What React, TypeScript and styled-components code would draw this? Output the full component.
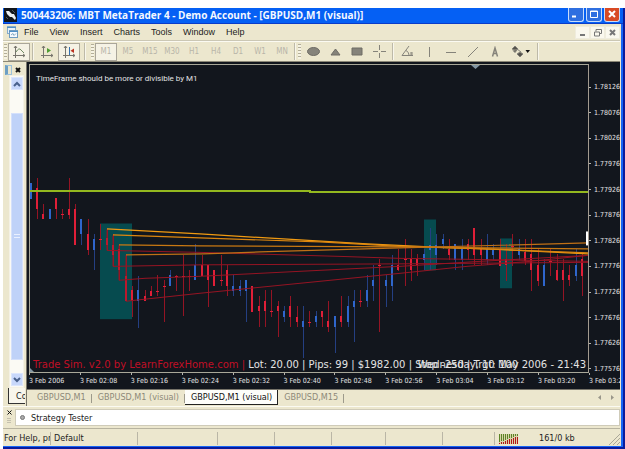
import React from "react";
import styled, { createGlobalStyle } from "styled-components";

const FACE = "#ece7ce";
const DARK = "#12161d";
const UI = '"DejaVu Sans Condensed", "DejaVu Sans", sans-serif';
const MENU = '"Liberation Sans", Arial, sans-serif';

const GlobalStyle = createGlobalStyle`
  *, *::before, *::after { box-sizing: border-box; }
  body { margin: 0; background: #fff; font-family: ${UI}; font-size: 9px; color: #222; }
  button { font: inherit; color: inherit; padding: 0; margin: 0; border: 0; background: none; }
  svg { display: block; }
`;

const Page = styled.div`
  min-height: 100vh;
  padding: 8px 0 0 3px;
  display: flex;
  flex-direction: column;
`;
const AppWindow = styled.main`
  flex: 1;
  display: flex;
  flex-direction: column;
  background: ${FACE};
  border-right: 2px solid #0a1c9c;
  border-bottom: 2px solid #0a1c9c;
  box-shadow: inset -2px -1px 0 #1766f5;
  padding: 0 3px 1px 0;
  overflow: hidden;
`;
const TitleBar = styled.header`
  height: 16px;
  flex: none;
  margin-right: -3px;
  padding: 0 3px 2px 1px;
  display: flex;
  align-items: center;
  gap: 4px;
  background: #0560f4;
  border-bottom: 1px solid #0a3cc8;
`;
const Title = styled.h1`
  flex: 1;
  margin: 0;
  font: bold 10px/14px "Open Sans", sans-serif;
  color: #f4f8ff;
  white-space: nowrap;
`;
const Captions = styled.div`
  display: flex;
  gap: 2px;
`;
const CaptionButton = styled.button<{ $close?: boolean }>`
  width: 16px;
  height: 14px;
  border: 1px solid #c8dcfa;
  border-top: 0;
  border-radius: 0 0 3px 3px;
  background: ${(p) => (p.$close ? "#d84a24" : "#2f6fe0")};
  display: grid;
  place-items: center;
`;
const MenuBar = styled.nav`
  height: 17px;
  flex: none;
  display: flex;
  align-items: center;
  gap: 6px;
  padding-left: 4px;
  font: 9px/12px ${MENU};
  border-bottom: 1px solid #cbc7b4;
`;
const MenuItems = styled.div`
  display: flex;
  gap: 11px;
`;
const MenuItem = styled.button`
  height: 14px;
`;
const MdiButtons = styled.div`
  margin-left: auto;
  display: flex;
`;
const MdiButton = styled.button`
  width: 15px;
  height: 13px;
  background: #faf8ee;
  border: 1px solid #efecdd;
  display: grid;
  place-items: center;
`;
const ToolBar = styled.div`
  height: 21px;
  flex: none;
  display: flex;
  align-items: center;
  border-top: 1px solid #fbfaf2;
  border-bottom: 1px solid #8b8776;
`;
const Grip = styled.span`
  width: 3px;
  height: 15px;
  margin: 0 1px;
  background: repeating-linear-gradient(#b3ae98 0 1px, #f6f3e4 1px 3px);
`;
const Rule = styled.span<{ $gap?: number }>`
  width: 2px;
  height: 17px;
  margin: 0 ${(p) => p.$gap ?? 2}px;
  border-left: 1px solid #bdb9a8;
  border-right: 1px solid #f8f6ec;
`;
const Tool = styled.button<{ $pressed?: boolean; $wide?: boolean }>`
  width: ${(p) => (p.$wide ? 29 : 22)}px;
  height: 18px;
  display: grid;
  place-items: center;
  border: 1px solid ${(p) => (p.$pressed ? "#aaa69a" : "transparent")};
  background: ${(p) => (p.$pressed ? "#f5f2e5" : "transparent")};
`;
const Frame = styled(Tool)`
  color: #b8b5a9;
  font-size: 8px;
`;
const Workspace = styled.div`
  flex: 1;
  display: flex;
  min-height: 0;
`;
const SidePanel = styled.aside`
  width: 24px;
  flex: none;
  display: flex;
  flex-direction: column;
  padding-top: 2px;
  border-right: 1px solid #77746a;
`;
const SideHead = styled.div`
  height: 11px;
  flex: none;
  display: flex;
  align-items: center;
  justify-content: space-between;
  padding: 0 5px 0 2px;
`;
const Swatch = styled.span`
  width: 7px;
  height: 10px;
  border: 1px solid #9cc2da;
  border-left: 3px solid #6d9fc4;
`;
const ScrollTrack = styled.div`
  flex: 1;
  width: 15px;
  margin-left: 6px;
  display: flex;
  flex-direction: column;
  align-items: center;
  background: #fbfaf4;
  border: 1px solid #f4f1e4;
`;
const ScrollButton = styled.button`
  width: 12px;
  height: 13px;
  margin: 1px 0;
  background: #c8d8fb;
  border: 1px solid #dce6fc;
  display: grid;
  place-items: center;
`;
const ScrollThumb = styled.div`
  flex: 1;
  width: 12px;
  margin: 22px 0 12px;
  background: #bfd2f8;
  border: 1px solid #d4e0fb;
  display: grid;
  place-items: center;
`;
const SideTab = styled.button`
  width: 17px;
  height: 16px;
  margin: 0 0 2px 5px;
  padding-left: 7px;
  overflow: hidden;
  text-align: left;
  background: #f8f6ec;
  border: 1px solid #333;
  border-top: 0;
  border-right: 0;
`;
const ChartColumn = styled.section`
  flex: 1;
  min-width: 0;
  display: flex;
  flex-direction: column;
`;
const ChartFrame = styled.div`
  flex: 1;
  min-height: 0;
  padding: 2px 0 0 2px;
  background: ${DARK};
  color: #e4e4e4;
  font-size: 7px;
  display: grid;
  grid-template-columns: minmax(0, 1fr) 31px;
  grid-template-rows: minmax(0, 1fr) 16px;
`;
const Plot = styled.div`
  position: relative;
  min-height: 0;
  border: 1px solid #a9a899;
  border-right-color: #a39b90;
`;
const Drawing = styled.svg`
  position: absolute;
  inset: 0;
  width: 100%;
  height: 100%;
`;
const Comment = styled.p`
  position: absolute;
  top: 9px;
  left: 6px;
  margin: 0;
  font: 8px/10px Roboto, sans-serif;
`;
const Overlay = styled.p<{ $end?: boolean }>`
  position: absolute;
  bottom: 1px;
  ${(p) => (p.$end ? "right: 2px;" : "left: 3px;")}
  margin: 0;
  white-space: nowrap;
  font: 10px/13px "DejaVu Sans", sans-serif;
`;
const Red = styled.span`
  color: #c00f26;
`;
const PriceAxis = styled.div`
  display: flex;
  flex-direction: column;
  justify-content: space-between;
  padding-top: 19px;
  overflow: hidden;
`;
const Price = styled.span`
  height: 8px;
  line-height: 8px;
  display: flex;
  align-items: center;
  gap: 3px;
  &::before { content: ""; width: 2px; height: 1px; background: #b5b5ae; }
`;
const TimeAxis = styled.div`
  grid-column: 1 / -1;
  display: grid;
  grid-template-columns: repeat(11, minmax(0, 1fr)) 31px;
  overflow: hidden;
`;
const Time = styled.span`
  white-space: nowrap;
  line-height: 13px;
  &::before { content: ""; display: block; width: 1px; height: 2px; background: #b5b5ae; }
`;
const TabBar = styled.div`
  height: 17px;
  flex: none;
  display: flex;
  align-items: flex-start;
  padding-left: 4px;
  border-top: 1px solid #77746a;
`;
const Tab = styled.button<{ $active?: boolean }>`
  height: 15px;
  padding: 0 6px;
  color: ${(p) => (p.$active ? "#111" : "#8c8979")};
  background: ${(p) => (p.$active ? "#fdfdfa" : "transparent")};
  border-bottom: ${(p) => (p.$active ? "1px solid #222" : "1px solid transparent")};
  position: relative;
  &::after {
    content: "";
    position: absolute;
    right: 0;
    top: ${(p) => (p.$active ? 0 : 4)}px;
    width: 1px;
    height: ${(p) => (p.$active ? 14 : 9)}px;
    background: ${(p) => (p.$active ? "#222" : "#9d9a8b")};
  }
`;
const TabArrows = styled.div`
  margin: 4px 5px 0 auto;
  display: flex;
  gap: 8px;
`;
const Tester = styled.div`
  flex: none;
  height: 23px;
  display: flex;
  border-top: 1px solid #fbfaf2;
  border-bottom: 1px solid #b7b3a0;
  padding: 2px 0;
`;
const TesterHandle = styled.div`
  width: 12px;
  display: flex;
  flex-direction: column;
  align-items: center;
  gap: 3px;
  padding: 1px 0;
`;
const TesterTitle = styled.div`
  flex: 1;
  display: flex;
  align-items: center;
  gap: 6px;
  padding-left: 4px;
  background: #fff;
  border: 1px solid #cfcbb9;
`;
const Dot = styled.span`
  width: 5px;
  height: 5px;
  border-radius: 50%;
  border: 1px solid #777;
  background: #aaa;
`;
const StatusBar = styled.footer`
  flex: none;
  height: 17px;
  display: grid;
  grid-template-columns: 47px 87px 80px 57px 57px 54px 57px 52px minmax(0, 1fr) 11px;
  align-items: end;
  padding-bottom: 1px;
  white-space: nowrap;
`;
const StatusCell = styled.span`
  height: 13px;
  line-height: 13px;
  overflow: hidden;
  padding-left: 3px;
  border-left: 1px solid #bab6a6;
  &:first-child { border: 0; padding-left: 1px; }
`;
const Connection = styled(StatusCell)`
  display: flex;
  align-items: center;
  gap: 21px;
  padding-left: 4px;
`;

/* Each bar: rising flag, wick top, wick bottom, body top, body bottom */
type Bar = [0 | 1, number, number, number, number];
const bars: Bar[] = [
  [1,183,199,183,199],[0,178,220,188,209],[0,204,220,214,220],[1,209,220,209,220],[0,198,220,198,209],
  [0,209,220,214,215],[0,178,220,209,215],[0,204,246,209,246],[1,219,246,219,235],[0,219,256,235,251],
  [1,235,271,240,251],[0,225,251,240,241],[0,230,251,239,246],[0,235,267,246,256],[0,245,281,250,271],
  [0,255,302,277,302],[0,287,318,291,302],[1,277,329,291,302],[0,291,302,297,302],[0,287,297,292,297],
  [0,276,297,292,293],[0,281,323,287,288],[1,271,287,276,287],[0,276,292,277,278],[0,256,317,277,278],
  [0,271,292,277,278],[1,245,281,266,281],[0,256,277,266,277],[0,266,308,266,281],[0,271,287,271,287],
  [0,256,287,281,282],[0,266,297,271,287],[1,276,297,287,292],[1,281,297,287,292],[1,281,323,281,292],
  [0,287,313,287,313],[0,297,328,307,312],[0,291,328,302,312],[0,291,318,312,313],[0,302,338,307,312],
  [1,307,323,312,318],[0,297,328,307,318],[0,307,328,318,323],[1,307,359,322,328],[0,312,328,323,324],
  [1,312,328,317,323],[0,312,328,312,318],[0,302,333,322,328],[1,317,354,317,328],[0,297,328,317,323],
  [1,297,328,307,323],[1,291,343,302,308],[0,291,308,302,303],[1,276,308,291,302],[1,266,302,281,287],
  [0,260,333,266,267],[1,276,308,281,287],[1,256,302,266,287],[0,250,272,266,271],[0,240,287,260,261],
  [0,250,282,260,271],[0,255,277,260,266],[1,250,271,255,261],[1,229,271,246,251],[1,235,266,246,256],
  [1,235,250,240,245],[0,240,261,250,256],[1,245,271,245,261],[1,240,271,250,261],[0,240,261,245,251],
  [0,229,266,229,256],[0,240,266,250,256],[1,235,266,250,261],[1,245,261,251,256],[0,240,267,250,267],
  [0,245,282,260,266],[0,235,267,247,248],[1,240,261,250,256],[0,240,266,253,262],[0,240,292,255,271],
  [0,250,287,266,282],[1,260,287,266,287],[0,250,277,262,263],[0,255,282,271,281],[0,260,302,271,281],
  [0,266,287,276,281],[1,250,282,266,277],[0,255,297,260,277],
];
const orange: [string, string][] = [
  ["107,229.5 200,234.5 367,244.5 440,248 500,250 588,254.5", "#f09a12"],
  ["113,235.5 200,238.5 320,242.5 400,247 470,249 588,253.5", "#dc860f"],
  ["119,245.5 200,246.5 400,247.5 588,249.5", "#c87812"],
  ["126,255.5 203,254.5 260,252.5 400,248.5 588,243.5", "#c07016"],
];
const red = [
  "107,230 107,251 200,253 340,257 400,259 470,260 588,262",
  "113,236 113,267 200,265.5 400,264.5 588,263",
  "119,246 119,281 145,279 200,277 300,272 400,267 480,262 588,256",
  "126,256 126,302 200,294 300,284 400,274 467,267 530,262 588,256",
];
const zones = [[100,224,32,96],[424,220,12,51],[500,239,12,50]];

const ChartDrawing = () => (
  <Drawing viewBox="30 65 558 308" preserveAspectRatio="none" role="img" aria-label="GBPUSD M1 candles">
    {zones.map(([x, y, w, h]) => (
      <rect key={x} x={x} y={y} width={w} height={h} fill="#064b4f" />
    ))}
    <g shapeRendering="crispEdges">
      {bars.map(([up, top, bottom, open, close], i) => {
        const x = Math.round(30.5 + i * 6.34);
        const flat = close - open < 2;
        return (
          <g key={i}>
            <rect x={x} y={top} width="1" height={bottom - top} fill={up ? "#243f82" : "#941424"} />
            <rect x={x - 1} y={open} width={flat ? 3 : 2} height={close - open} fill={up ? "#2f66cc" : "#e01f38"} />
          </g>
        );
      })}
    </g>
    {red.map((points) => (
      <polyline key={points} points={points} fill="none" stroke="#961423" strokeWidth="1" />
    ))}
    {orange.map(([points, color]) => (
      <polyline key={points} points={points} fill="none" stroke={color} strokeWidth="1.2" />
    ))}
    <path d="M30 191H310V192H588" fill="none" stroke="#93b81f" strokeWidth="2" shapeRendering="crispEdges" />
    <path d="M471 65h9l-4.500 4z" fill="#8396a3" />
    <path d="M30 369l4 4h-4z" fill="#8396a3" />
    <rect x="586" y="232" width="2" height="14" fill="#fff" />
  </Drawing>
);

const Glyph = ({ d, w = 12, h = 12, fill = "none", stroke = "#85837a", sw = 1 }: {
  d: string; w?: number; h?: number; fill?: string; stroke?: string; sw?: number;
}) => (
  <svg width={w} height={h} viewBox={`0 0 ${w} ${h}`} aria-hidden="true">
    <path d={d} fill={fill} stroke={stroke} strokeWidth={sw} />
  </svg>
);

const axes = "M2.5 0V12M0 9.5H12M1 2L2.5 0L4 2M10 8L12 9.5L10 11";
const prices = ["1.78126","1.78076","1.78026","1.77976","1.77926","1.77876","1.77826","1.77776","1.77726","1.77676","1.77626","1.77576"];
const times = ["3 Feb 2006","3 Feb 02:08","3 Feb 02:16","3 Feb 02:24","3 Feb 02:32","3 Feb 02:40","3 Feb 02:48","3 Feb 02:56","3 Feb 03:04","3 Feb 03:12","3 Feb 03:20","3 Feb 03:28"];
const frames = ["M1","M5","M15","M30","H1","H4","D1","W1","MN"];
const tabs = ["GBPUSD,M1","GBPUSD,M1 (visual)","GBPUSD,M1 (visual)","GBPUSD,M15"];

export default function App() {
  return (
    <Page>
      <GlobalStyle />
      <AppWindow>
        <TitleBar>
          <svg width="13" height="14" viewBox="0 0 13 14" aria-hidden="true">
            <rect width="13" height="14" fill="#10151c" />
            <path d="M2 3L5 3L8 6L10 6L12 10L11 12L8 9L6 9L3 6Z" fill="#e9eef2" />
            <path d="M8 2L11 5M2 9L4 11" stroke="#4b5962" />
          </svg>
          <Title>500443206: MBT MetaTrader 4 - Demo Account - [GBPUSD,M1 (visual)]</Title>
          <Captions>
            <CaptionButton aria-label="Minimize"><Glyph w={10} h={10} d="M1 7.5H5" stroke="#fff" sw={2} /></CaptionButton>
            <CaptionButton aria-label="Maximize"><Glyph w={10} h={10} d="M1.5 2H8.5V8.5H1.5ZM1 2.5H9" stroke="#fff" /></CaptionButton>
            <CaptionButton aria-label="Close" $close><Glyph w={10} h={10} d="M2 2L8 8M8 2L2 8" stroke="#fff" sw={2} /></CaptionButton>
          </Captions>
        </TitleBar>
        <MenuBar>
          <svg width="11" height="12" viewBox="0 0 11 12" aria-hidden="true">
            <rect x=".5" y=".5" width="8" height="7" fill="#e8f2fa" stroke="#86abc8" />
            <rect x="2.5" y="4.5" width="8" height="7" fill="#f5faff" stroke="#6f9cc0" />
            <path d="M0 1.5H9M2 5.5H11" stroke="#4d8fc7" />
            <path d="M4 9L6 7.500L7 9.500L9 7.500" fill="none" stroke="#84aac4" />
          </svg>
          <MenuItems>
            {["File","View","Insert","Charts","Tools","Window","Help"].map((m) => <MenuItem key={m}>{m}</MenuItem>)}
          </MenuItems>
          <MdiButtons>
            <MdiButton aria-label="Minimize chart"><Glyph w={9} h={9} d="M2 7H7" stroke="#777" sw={2} /></MdiButton>
            <MdiButton aria-label="Restore chart"><Glyph w={9} h={9} d="M3 3.500V1.500H8.500V5.500H7M1.500 4H6.500V8H1.500Z" stroke="#777" /></MdiButton>
            <MdiButton aria-label="Close chart"><Glyph w={9} h={9} d="M2 2L7 7M7 2L2 7" stroke="#777" sw={2} /></MdiButton>
          </MdiButtons>
        </MenuBar>
        <ToolBar role="toolbar">
          <Grip />
          <Tool $pressed aria-label="Line chart">
            <svg width="12" height="12" viewBox="0 0 12 12"><path d={axes} fill="none" stroke="#77756d" /><path d="M3 6Q6 1 8 4L11 7" fill="none" stroke="#6f8a64" /></svg>
          </Tool>
          <Rule />
          <Tool aria-label="Auto scroll">
            <svg width="12" height="12" viewBox="0 0 12 12"><path d={axes} fill="none" stroke="#77756d" /><path d="M6 2L10 4.500L6 7Z" fill="#4e9c31" /></svg>
          </Tool>
          <Tool $pressed aria-label="Chart shift">
            <svg width="12" height="12" viewBox="0 0 12 12"><path d={axes} fill="none" stroke="#77756d" /><path d="M6.500 1V9" stroke="#316fb0" /><path d="M11 2.500V7L7.500 4.700Z" fill="#bb3020" /></svg>
          </Tool>
          <Rule $gap={4} />
          <Grip />
          {frames.map((f, i) => <Frame key={f} $pressed={i === 0}>{f}</Frame>)}
          <Rule $gap={1} />
          <Grip />
          <Tool aria-label="Ellipse"><svg width="13" height="9" viewBox="0 0 13 9"><ellipse cx="6.500" cy="4.500" rx="6" ry="4" fill="#85837a" stroke="#6e6c65" /></svg></Tool>
          <Tool aria-label="Triangle"><Glyph w={11} h={8} d="M1 7L5.500 1L10 7Z" fill="#85837a" stroke="#6e6c65" /></Tool>
          <Tool aria-label="Rectangle"><Glyph w={12} h={9} d="M1 1H11V8H1Z" fill="#85837a" stroke="#6e6c65" /></Tool>
          <Tool aria-label="Crosshair"><Glyph w={13} h={13} d="M6.500 0V5M6.500 8V13M0 6.500H5M8 6.500H13" /></Tool>
          <Rule />
          <Tool aria-label="Trendline by angle"><Glyph w={13} h={11} d="M8 0L1 9.500H12M5 4.500Q8 6 8 9M10 6V9M11 6V9" /></Tool>
          <Tool aria-label="Vertical line"><Glyph d="M6.500 1V11" /></Tool>
          <Tool aria-label="Horizontal line"><Glyph d="M1 6.500H11" /></Tool>
          <Tool aria-label="Trendline"><Glyph d="M1 11L11 1" /></Tool>
          <Tool aria-label="Text"><Glyph d="M3.500 10.500L6 2L8.500 10.500M4 7.500H8" sw={1.5} /></Tool>
          <Tool aria-label="Arrows" $wide>
            <svg width="18" height="11" viewBox="0 0 18 11">
              <path d="M0 3L3 0L6 3L3 4ZM1 4.500L3 6.500L5 4M5 8L8 6L11 8L8 11ZM5 3L9 6" fill="#55534d" stroke="#85837a" />
              <path d="M13.500 4H18L15.700 7Z" fill="#111" />
            </svg>
          </Tool>
          <Rule />
        </ToolBar>
        <Workspace>
          <SidePanel>
            <SideHead><Swatch /><Glyph w={6} h={6} d="M1 1L5 5M5 1L1 5" stroke="#111" sw={2} /></SideHead>
            <ScrollTrack>
              <ScrollButton aria-label="Scroll up"><Glyph w={8} h={6} d="M1 5L4 2L7 5" stroke="#49618c" sw={2} /></ScrollButton>
              <ScrollThumb><Glyph w={6} h={6} d="M0 .5H6M0 3.500H6" stroke="#e9f0ff" /></ScrollThumb>
              <ScrollButton aria-label="Scroll down"><Glyph w={8} h={6} d="M1 1L4 4L7 1" stroke="#49618c" sw={2} /></ScrollButton>
            </ScrollTrack>
            <SideTab>Common</SideTab>
          </SidePanel>
          <ChartColumn>
            <ChartFrame>
              <Plot>
                <ChartDrawing />
                <Comment>TimeFrame should be more or divisible by M1</Comment>
                <Overlay><Red>Trade Sim. v2.0 by LearnForexHome.com |</Red> Lot: 20.00 | Pips: 99 | $1982.00 | Stop -250 | Trgt: 100</Overlay>
                <Overlay $end>Wednesday, 10 May 2006 - 21:43</Overlay>
              </Plot>
              <PriceAxis>{prices.map((p) => <Price key={p}>{p}</Price>)}</PriceAxis>
              <TimeAxis>{times.map((t) => <Time key={t}>{t}</Time>)}</TimeAxis>
            </ChartFrame>
            <TabBar>
              {tabs.map((t, i) => <Tab key={i} $active={i === 2}>{t}</Tab>)}
              <TabArrows>
                <button aria-label="Previous tab"><Glyph w={5} h={7} d="M4 1L1 3.500L4 6Z" fill="#99968a" stroke="none" /></button>
                <button aria-label="Next tab"><Glyph w={5} h={7} d="M1 1L4 3.500L1 6Z" fill="#99968a" stroke="none" /></button>
              </TabArrows>
            </TabBar>
          </ChartColumn>
        </Workspace>
        <Tester>
          <TesterHandle>
            <Glyph w={5} h={5} d="M.5 .5L4.500 4.500M4.500 .5L.5 4.500" stroke="#111" />
            <Glyph w={4} h={6} d="M0 .5H4M0 2.500H4M0 4.500H4" stroke="#c4c0ae" />
          </TesterHandle>
          <TesterTitle><Dot />Strategy Tester</TesterTitle>
        </Tester>
        <StatusBar>
          <StatusCell>For Help, press F1</StatusCell>
          <StatusCell>Default</StatusCell>
          <StatusCell />
          <StatusCell />
          <StatusCell />
          <StatusCell />
          <StatusCell />
          <StatusCell />
          <Connection>
            <svg width="19" height="10" viewBox="0 0 19 10" aria-hidden="true">
              <rect width="19" height="10" fill="#d8d3a8" />
              {[0,1,2,3,4,5,6,7,8,9].map((n) => {
                const split = 9 - Math.round(n * 0.7);
                return (
                  <g key={n}>
                    <rect x={n * 2} width="1" height={split - 1} fill="#5c8426" />
                    <rect x={n * 2} y={split} width="1" height={10 - split} fill="#b3141a" />
                  </g>
                );
              })}
            </svg>
            161/0 kb
          </Connection>
          <Glyph w={11} h={12} d="M11 1L0 12M11 5L4 12M11 9L8 12" stroke="#aaa797" />
        </StatusBar>
      </AppWindow>
    </Page>
  );
}
